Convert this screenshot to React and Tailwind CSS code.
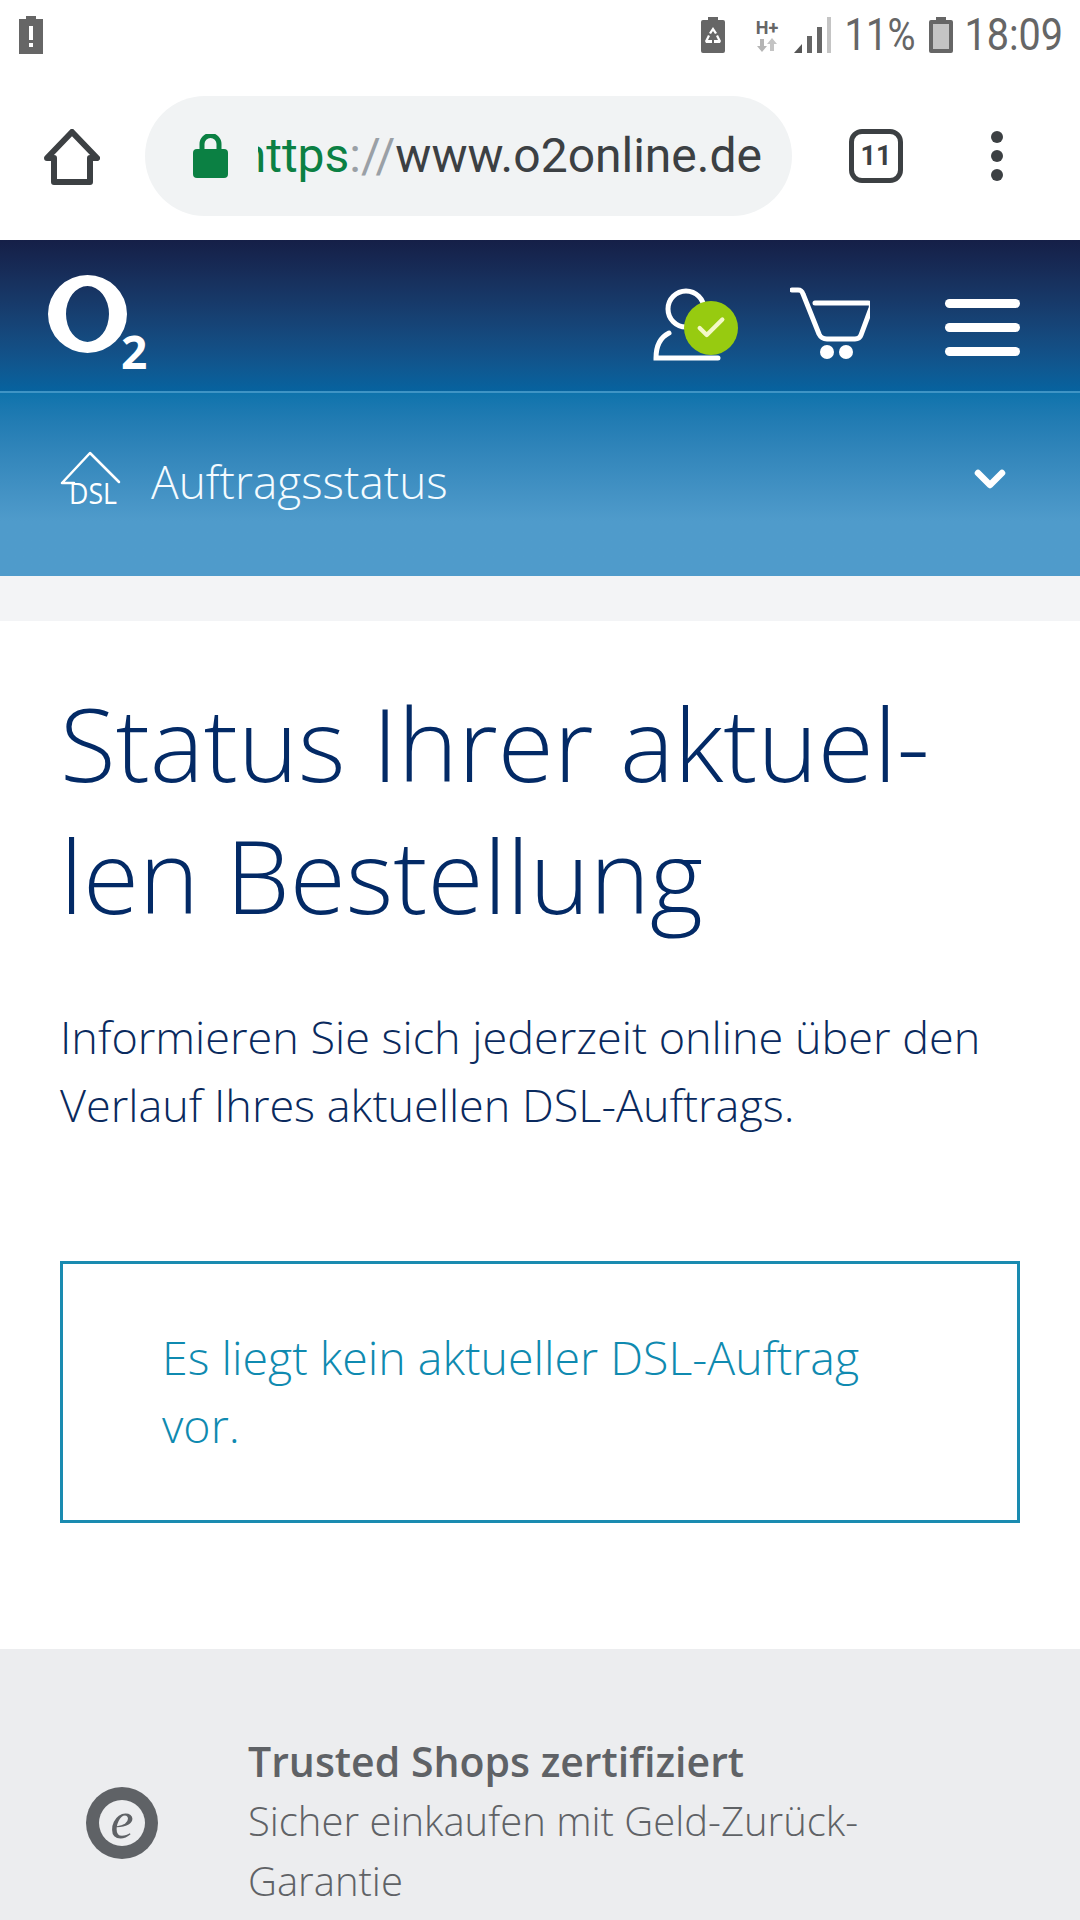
import { Check } from "lucide-react";

const BODY_FONT = "font-['Open_Sans','Noto_Sans',sans-serif]";

// Status bar
const AlertBattery = () => (
  <svg width="24" height="38" viewBox="0 0 24 38">
    <path d="M7 0h10v3h7v35H0V3h7z" fill="#666" />
    <rect x="10" y="10" width="4" height="14" fill="#fff" />
    <rect x="10" y="27" width="4" height="4" fill="#fff" />
  </svg>
);

const RecycleBattery = () => (
  <svg width="24" height="36" viewBox="0 0 24 36">
    <path d="M7 0h10v3h5a2 2 0 0 1 2 2v29a2 2 0 0 1-2 2H2a2 2 0 0 1-2-2V5a2 2 0 0 1 2-2h5z" fill="#666" />
    <path d="M12 10l4 6-2 1-2-3-2 3-2-1zM4 24l3-6 2 1-2 4h4v3H5zM20 24l-3-6-2 1 2 4h-4v3h6z" fill="#fff" />
  </svg>
);

const NetworkType = () => (
  <div className="flex w-[26px] flex-col items-center">
    <span className="text-[18px] leading-[20px] font-bold text-[#666]">H+</span>
    <svg width="22" height="14" viewBox="0 0 22 14">
      <path d="M6 14L1 8h3V1h4v7h3z" fill="#b5b5b5" />
      <path d="M16 0l5 6h-3v7h-4V6h-3z" fill="#c4c4c4" />
    </svg>
  </div>
);

const Signal = () => (
  <svg width="37" height="36" viewBox="0 0 37 36">
    <path d="M0 36L8 27V36z" fill="#555" />
    <rect x="13" y="19" width="5" height="17" fill="#666" />
    <rect x="23" y="10" width="5" height="26" fill="#666" />
    <rect x="33" y="0" width="4" height="36" fill="#c4c4c4" />
  </svg>
);

const BatteryLevel = () => (
  <svg width="24" height="36" viewBox="0 0 24 36">
    <path d="M7 0h10v3h5a2 2 0 0 1 2 2v29a2 2 0 0 1-2 2H2a2 2 0 0 1-2-2V5a2 2 0 0 1 2-2h5z" fill="#666" />
    <rect x="4" y="7" width="16" height="25" fill="#c4c4c4" />
  </svg>
);

const StatusBar = () => (
  <div className="flex h-[70px] items-start bg-white pl-[19px] pr-[17px] pt-[16px] font-['Roboto',sans-serif]">
    <AlertBattery />
    <div className="ml-auto flex items-center">
      <RecycleBattery />
      <div className="ml-[29px]"><NetworkType /></div>
      <div className="ml-[14px]"><Signal /></div>
      <div className="ml-[15px] flex w-[70px] justify-end">
        <span className="origin-right scale-x-[0.85] whitespace-nowrap text-[45px] leading-[38px] text-[#666]">11%</span>
      </div>
      <div className="ml-[13px]"><BatteryLevel /></div>
      <div className="ml-[14px] flex w-[96px] justify-end">
        <span className="origin-right scale-x-[0.88] whitespace-nowrap text-[45px] leading-[38px] text-[#666]">18:09</span>
      </div>
    </div>
  </div>
);

// Browser toolbar
const BrowserToolbar = () => (
  <div className="flex h-[170px] items-start bg-white pt-[26px] font-['Roboto',sans-serif]">
    <svg className="ml-[44px] mt-[33px] shrink-0" width="56" height="56" viewBox="0 0 56 56">
      <path d="M3 29L28 3l25 26h-7v24H10V29z" fill="none" stroke="#3c4043" strokeWidth="6" strokeLinejoin="round" />
    </svg>
    <div className="ml-[45px] flex h-[120px] w-[647px] items-center rounded-full bg-[#f1f3f4] pl-[48px] pr-[30px]">
      <svg className="shrink-0" width="35" height="44" viewBox="0 0 35 44">
        <path d="M9 18v-8a8.500 8.500 0 0 1 17 0v8" fill="none" stroke="#0b8043" strokeWidth="5" />
        <rect x="0" y="15" width="35" height="29" rx="4" fill="#0b8043" />
      </svg>
      {/* start of the address scrolls out on the left, like the real omnibox */}
      <div className="ml-[30px] flex min-w-0 flex-1 justify-end overflow-hidden">
        <span className="shrink-0 whitespace-nowrap text-[48px] leading-[60px]">
          <span className="text-[#0b8043]">https</span>
          <span className="text-[#9aa0a6]">://</span>
          <span className="text-[#3c4043]">www.o2online.de</span>
        </span>
      </div>
    </div>
    <div className="ml-[57px] mt-[33px] flex h-[54px] w-[54px] items-center justify-center rounded-[13px] border-[5px] border-[#3c4043] text-[27px] font-bold text-[#3c4043]">
      11
    </div>
    <div className="ml-[88px] mt-[35px] flex flex-col gap-[7px]">
      <div className="h-[12px] w-[12px] rounded-full bg-[#3c4043]" />
      <div className="h-[12px] w-[12px] rounded-full bg-[#3c4043]" />
      <div className="h-[12px] w-[12px] rounded-full bg-[#3c4043]" />
    </div>
  </div>
);

// o2 header
const Logo = () => (
  <svg className="overflow-visible" width="104" height="100" viewBox="0 0 104 100">
    <path
      fillRule="evenodd"
      fill="#fff"
      d="M1 39a39.500 39 0 1 0 79 0a39.500 39 0 1 0-79 0zM19 39a21.500 28 0 1 1 43 0a21.500 28 0 1 1-43 0z"
    />
    <text x="74" y="94" fill="#fff" fontSize="46" fontWeight="700" fontFamily="Open Sans, sans-serif">2</text>
  </svg>
);

const UserIcon = () => (
  <div className="relative h-[76px] w-[90px]">
    <svg width="90" height="76" viewBox="0 0 90 76">
      <circle cx="33" cy="22" r="18" fill="none" stroke="#fff" strokeWidth="5" />
      <path d="M16 46C8 50 3 58 3 71h62" fill="none" stroke="#fff" strokeWidth="5" strokeLinecap="round" />
    </svg>
    <div className="absolute left-[31px] top-[14px] flex h-[54px] w-[54px] items-center justify-center rounded-full bg-[#97cb10]">
      <Check size={34} strokeWidth={3} className="text-[#f4f8c8]" />
    </div>
  </div>
);

const CartIcon = () => (
  <svg width="80" height="72" viewBox="0 0 80 72">
    <path d="M2 3h6c3 0 4 1 5 4l16 40c2 4 4 5 8 5h28c3 0 5-1 6-4l10-27c1-3 0-5-3-5H25" fill="none" stroke="#fff" strokeWidth="5" strokeLinecap="round" />
    <circle cx="37" cy="65" r="7" fill="#fff" />
    <circle cx="56" cy="65" r="7" fill="#fff" />
  </svg>
);

const Header = () => (
  <div className="flex h-[151px] items-start bg-gradient-to-b from-[#151f47] to-[#06639f] pl-[47px] pt-[35px]">
    <Logo />
    <div className="ml-auto mr-[60px] mt-[12px] flex items-start">
      <UserIcon />
      <div className="ml-[47px]"><CartIcon /></div>
      <div className="ml-[75px] mt-[12px] flex flex-col gap-[15px]">
        <div className="h-[9px] w-[75px] rounded-full bg-white" />
        <div className="h-[9px] w-[75px] rounded-full bg-white" />
        <div className="h-[9px] w-[75px] rounded-full bg-white" />
      </div>
    </div>
  </div>
);

const DslIcon = () => (
  <svg className="overflow-visible" width="62" height="56" viewBox="0 0 62 56">
    <path d="M3 32L31 2l29 29M3 32h12" fill="none" stroke="#fff" strokeWidth="2.500" strokeLinecap="round" strokeLinejoin="round" />
    <text x="10" y="53" fill="#fff" fontSize="29" fontFamily="Open Sans, sans-serif" textLength="48" lengthAdjust="spacingAndGlyphs">DSL</text>
  </svg>
);

const SubNav = () => (
  <div className="flex h-[185px] items-start border-t-2 border-[#3f94c5] bg-gradient-to-b from-[#0e73ac] via-[#4f9bcb] via-70% to-[#4f9bcb] pl-[59px] pr-[60px] pt-[58px]">
    <DslIcon />
    <span className={`ml-[30px] text-[46px] leading-[60px] font-light text-[#f4fbff] ${BODY_FONT}`}>Auftragsstatus</span>
    <svg className="ml-auto mr-[13px] mt-[17px]" width="34" height="24" viewBox="0 0 34 24">
      <path d="M5 5l12 12L29 5" fill="none" stroke="#fff" strokeWidth="6.500" strokeLinecap="round" strokeLinejoin="round" />
    </svg>
  </div>
);

// Page content
const MainContent = () => (
  <div className={`h-[1028px] bg-white px-[60px] ${BODY_FONT}`}>
    <h1 className="pt-[56px] text-[102px] leading-[132px] font-light text-[#032a66]">
      Status Ihrer aktuel-<br />len Bestellung
    </h1>
    <p className="mt-[62px] text-[45px] leading-[68px] font-light text-[#0a2a5e]">
      Informieren Sie sich jederzeit online über den<br />Verlauf Ihres aktuellen DSL-Auftrags.
    </p>
    <div className="mt-[122px] h-[262px] border-[3px] border-[#1a8bb0] pl-[99px] pt-[59px] text-[46.500px] leading-[68px] font-light text-[#0f8ab0]">
      Es liegt kein aktueller DSL-Auftrag<br />vor.
    </div>
  </div>
);

const TrustedFooter = () => (
  <div className={`flex h-[272px] items-start bg-[#ecedef] pl-[85px] pt-[82px] ${BODY_FONT}`}>
    <svg className="mt-[55px] shrink-0" width="74" height="74" viewBox="0 0 74 74">
      <circle cx="37" cy="37" r="36" fill="#5f6266" />
      <circle cx="37" cy="37" r="23" fill="#ecedef" />
      <text x="37" y="52" textAnchor="middle" fill="#5f6266" fontSize="52" fontStyle="italic" fontFamily="Liberation Serif, serif">e</text>
    </svg>
    <div className="ml-[89px] text-[#5f6266]">
      <p className="text-[41px] leading-[60px] font-semibold">Trusted Shops zertifiziert</p>
      <p className="text-[40px] leading-[60px] font-light">Sicher einkaufen mit Geld-Zurück-<br />Garantie</p>
    </div>
  </div>
);

export default function App() {
  return (
    <div className="h-[1920px] w-[1080px] overflow-hidden bg-white">
      <StatusBar />
      <BrowserToolbar />
      <Header />
      <SubNav />
      <div className="h-[45px] bg-[#f3f4f6]" />
      <MainContent />
      <TrustedFooter />
    </div>
  );
}
